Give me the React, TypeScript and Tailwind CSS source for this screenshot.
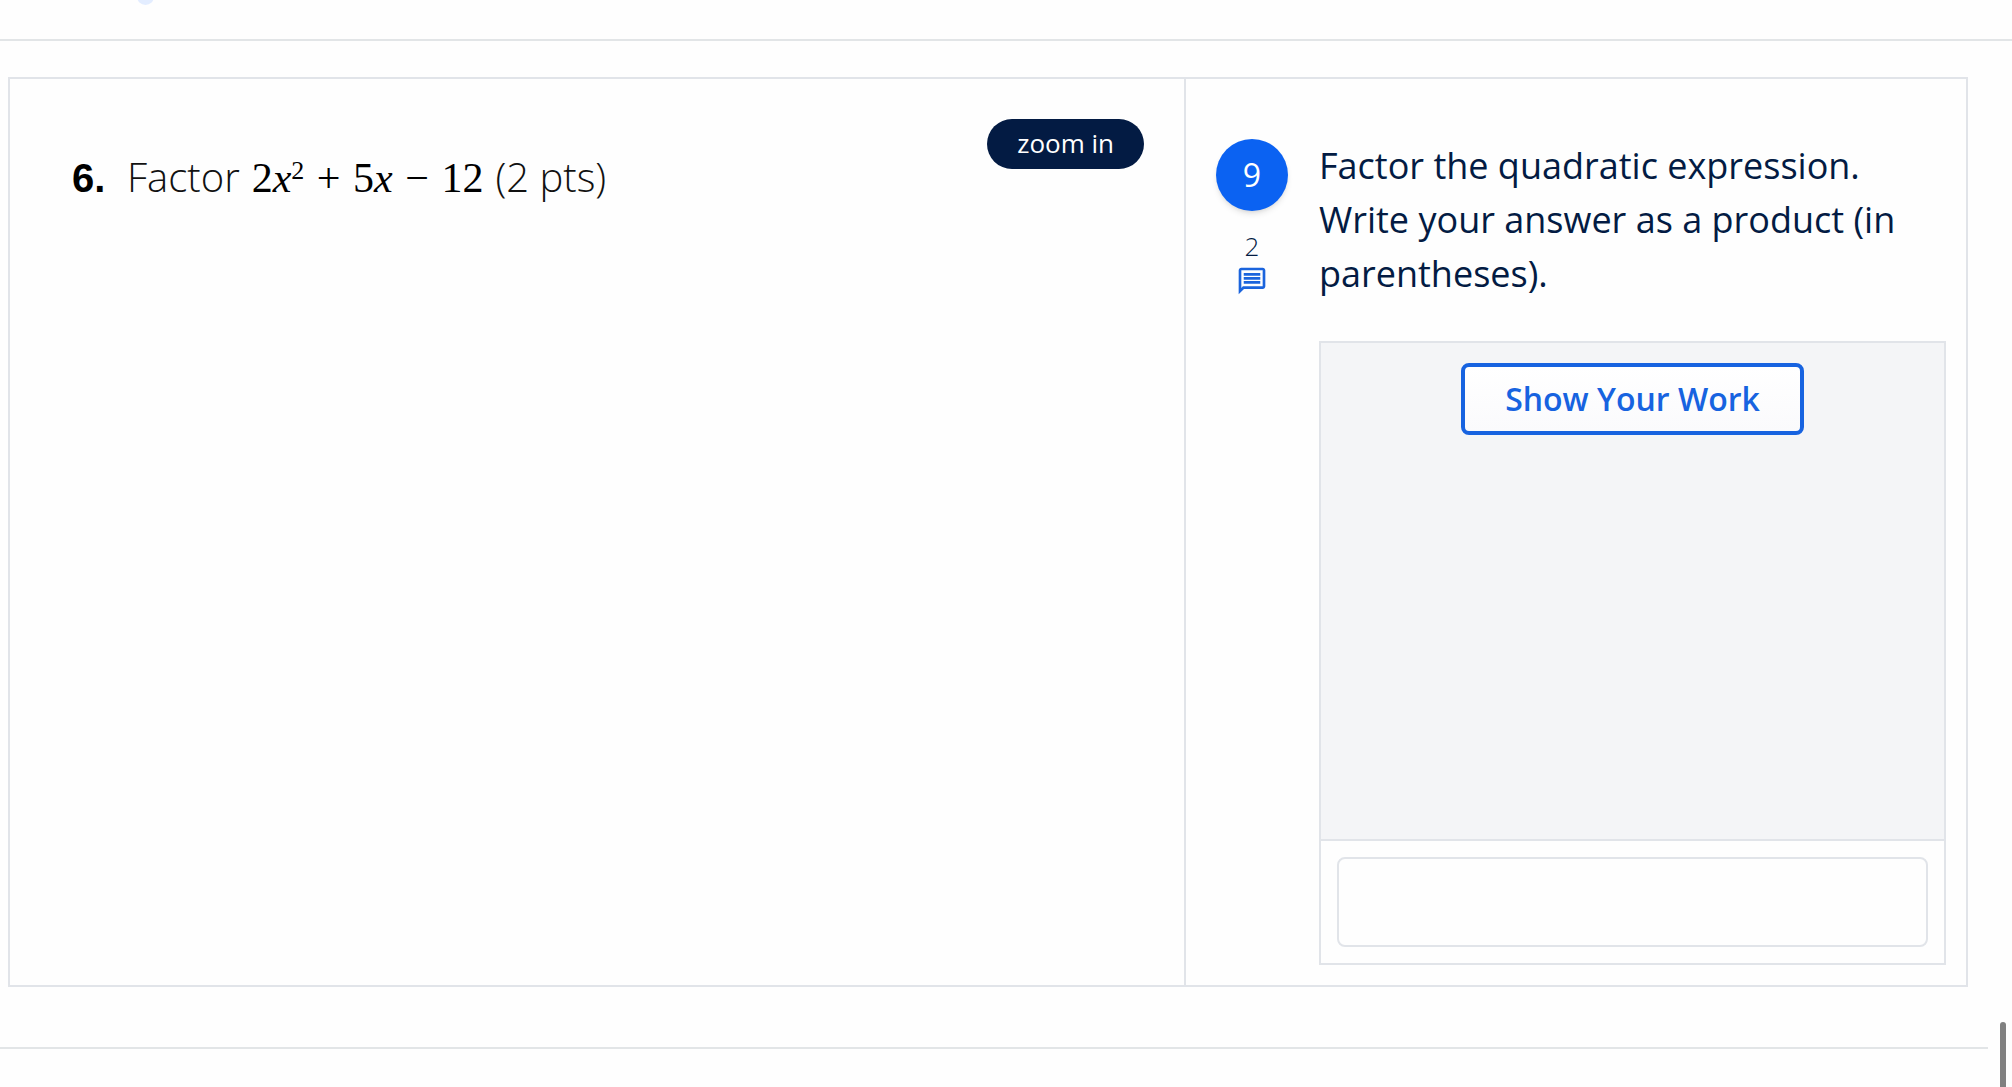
import React from "react";

function ChatIcon() {
  return (
    <svg viewBox="0 0 24 24" className="size-8" fill="#1b64dd" aria-hidden="true">
      <path d="M4 4h16v12H5.17L4 17.17V4m0-2c-1.1 0-1.99.9-1.99 2L2 22l4-4h14c1.1 0 2-.9 2-2V4c0-1.1-.9-2-2-2H4zm1.800 10h12.400v2H5.800v-2zm0-3h12.400v2H5.800V9zm0-3h12.400v2H5.800V6z" />
    </svg>
  );
}

function ProblemPane() {
  return (
    <section className="flex items-start justify-between border-r-2 border-[#e1e4e9] pt-10 pr-10 pl-[62px]">
      <h1 className="mt-7 flex items-baseline text-[40px] leading-[60px] font-light whitespace-nowrap text-[#111111]">
        <span className="w-[55px] font-['Liberation_Sans'] font-bold text-black">6.</span>
        <span className="font-['Open_Sans']">Factor</span>
        <span className="mx-3 font-['Liberation_Serif'] text-[42px] font-normal text-black">
          2<i>x</i>
          <sup className="text-[26px]">2</sup>
          <span className="mx-0.5"> + </span>5<i>x</i>
          <span className="mx-0.5"> − </span>12
        </span>
        <span className="font-['Open_Sans']">(2 pts)</span>
      </h1>
      <button className="h-[50px] rounded-full bg-[#031b43] px-[30px] pb-0.5 text-[26px] leading-[48px] text-white">
        zoom in
      </button>
    </section>
  );
}

function AnswerPane() {
  return (
    <section className="flex pt-[60px] pr-5 pb-5 pl-[30px]">
      <div className="w-[103px] shrink-0">
        <div className="flex w-[72px] flex-col items-center">
          <div className="flex size-[72px] items-center justify-center rounded-full bg-[#0b62f2] text-[32px] text-white shadow-md">
            9
          </div>
          <div className="mt-4 text-[26px] leading-[38px] font-light text-[#031b43]">2</div>
          <button aria-label="Comments">
            <ChatIcon />
          </button>
        </div>
      </div>
      <div className="min-w-0 flex-1">
        <p className="text-[36px] leading-[54px]">
          Factor the quadratic expression. Write your answer as a product (in parentheses).
        </p>
        <div className="mt-10 border-2 border-[#e1e4e9]">
          <div className="flex h-[496px] items-start justify-center bg-[#f4f5f7] pt-5">
            <button className="h-[72px] rounded-lg border-4 border-[#1763e0] bg-linear-to-b from-white to-[#fafafc] px-10 text-[32px] font-semibold text-[#1763e0]">
              Show Your Work
            </button>
          </div>
          <div className="border-t-2 border-[#e1e4e9] p-4">
            <input
              aria-label="Answer"
              className="block h-[90px] w-full rounded-lg border-2 border-[#e1e4e9] px-4 text-[32px]"
            />
          </div>
        </div>
      </div>
    </section>
  );
}

export default function App() {
  return (
    <div className="relative min-h-screen overflow-hidden bg-[#fefefe] font-['Open_Sans',sans-serif] text-[#031b43]">
      <header className="flex h-[41px] items-start border-b-2 border-[#e2e5e7] pl-[137px]">
        <span className="-mt-3 size-[17px] rounded-full bg-[#e3edff]" />
      </header>
      <main className="mt-9 mr-11 ml-2 grid grid-cols-[1176fr_780fr] border-2 border-[#e1e4e9]">
        <ProblemPane />
        <AnswerPane />
      </main>
      <hr className="mt-[60px] mr-6 border-t-2 border-[#e2e5e7]" />
      <div className="absolute right-1.5 bottom-0 h-[65px] w-1.5 rounded-t-full bg-[#808080]" />
    </div>
  );
}
